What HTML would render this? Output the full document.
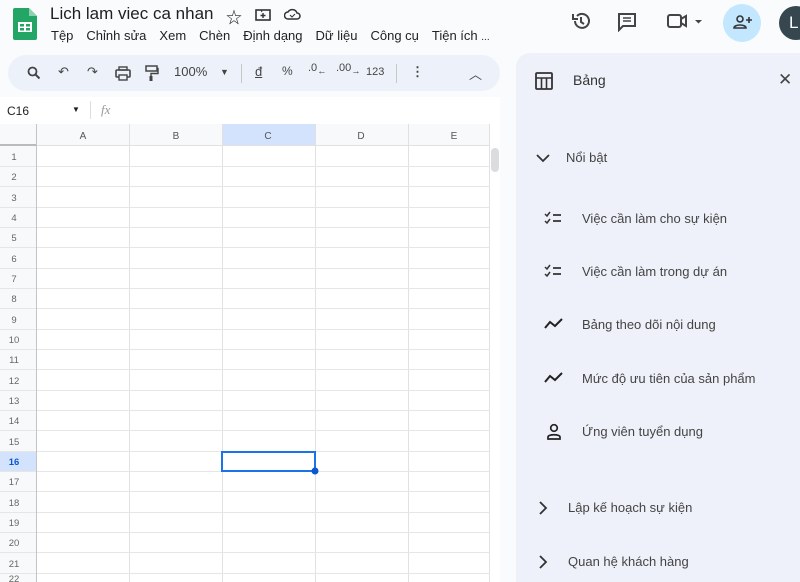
<!DOCTYPE html>
<html><head><meta charset="utf-8"><style>
*{margin:0;padding:0;box-sizing:border-box}
body{width:800px;height:582px;overflow:hidden;background:#f9fbfd;font-family:"Liberation Sans","Noto Sans CJK SC",sans-serif;color:#1f1f1f;position:relative}
.abs{position:absolute}
.menu span{margin-right:13px}
.tb{left:8px;top:55px;width:492px;height:36px;border-radius:18px;background:#edf2fa}
.tb .i{position:absolute;top:9px;font-size:13px;color:#444}
.grid{left:0;top:124px;width:500px;height:458px;background:#fff}
.rn{position:absolute;left:0;width:36px;font-size:10px;color:#666;text-align:center}
.panel{left:516px;top:53px;width:284px;height:529px;background:#eef1f9;border-radius:14px 0 0 0}
.it{position:absolute;left:66px;font-size:13px;color:#444}
.ic{position:absolute;left:28px}
</style></head><body>
<!-- logo -->
<svg class="abs" style="left:13px;top:8px" width="24" height="32" viewBox="0 0 24 32"><path d="M2 0h14l8 8v22a2 2 0 0 1-2 2H2a2 2 0 0 1-2-2V2a2 2 0 0 1 2-2z" fill="#23a566"/><path d="M16 0v8h8z" fill="#8ed1b1"/><rect x="5" y="14" width="14" height="10" fill="#fff"/><rect x="7" y="16" width="4" height="2.5" fill="#23a566"/><rect x="13" y="16" width="4" height="2.5" fill="#23a566"/><rect x="7" y="20" width="4" height="2.5" fill="#23a566"/><rect x="13" y="20" width="4" height="2.5" fill="#23a566"/></svg>
<div class="abs" style="left:50px;top:4px;font-size:17px;color:#1f1f1f">Lich lam viec ca nhan</div>
<div class="abs" style="left:226px;top:4px;font-size:16px">☆</div>
<svg class="abs" style="left:255px;top:8px" width="16" height="13"><rect x="1" y="2" width="14" height="10" fill="none" stroke="#333" stroke-width="1.6"/><path d="M1 2h5l1 2" stroke="#333" fill="none"/><path d="M8 5v5M5.5 7.5h5" stroke="#333" stroke-width="1.4"/></svg>
<svg class="abs" style="left:284px;top:8px" width="17" height="12"><path d="M4 11h9a3 3 0 0 0 0-6 5 5 0 0 0-9-1 3.5 3.5 0 0 0 0 7z" fill="none" stroke="#333" stroke-width="1.5"/><path d="M6 7l2 2 3-3" stroke="#333" fill="none"/></svg>
<div class="abs menu" style="left:51px;top:28px;font-size:13px;color:#222;white-space:nowrap"><span>Tệp</span><span>Chỉnh sửa</span><span>Xem</span><span>Chèn</span><span>Định dạng</span><span>Dữ liệu</span><span>Công cụ</span><span style="margin:0">Tiện ích</span> <span style="font-size:10px">...</span></div>
<!-- right icons -->
<svg class="abs" style="left:571px;top:11px" width="20" height="20" viewBox="0 0 20 20"><path d="M4 10a7 7 0 1 0 2-5" fill="none" stroke="#444" stroke-width="2"/><path d="M2 3v5h5" fill="none" stroke="#444" stroke-width="2"/><path d="M10 6v5l3 2" fill="none" stroke="#444" stroke-width="2"/></svg>
<svg class="abs" style="left:617px;top:12px" width="20" height="20"><path d="M2 2h16v12H6l-4 4z" fill="none" stroke="#444" stroke-width="2"/><path d="M6 6h8M6 9h8" stroke="#444" stroke-width="1.5"/></svg>
<svg class="abs" style="left:667px;top:13px" width="38" height="16"><rect x="1" y="2" width="13" height="12" rx="2" fill="none" stroke="#444" stroke-width="2"/><path d="M14 6l5-3v10l-5-3" fill="none" stroke="#444" stroke-width="2"/><path d="M28 7h7l-3.5 3.5z" fill="#444"/></svg>
<div class="abs" style="left:723px;top:4px;width:38px;height:38px;border-radius:50%;background:#c2e7ff"></div>
<svg class="abs" style="left:733px;top:14px" width="20" height="16"><circle cx="7" cy="5" r="3" fill="none" stroke="#333" stroke-width="1.6"/><path d="M1 14c0-4 12-4 12 0z" fill="none" stroke="#333" stroke-width="1.6"/><path d="M16 3v6M13 6h6" stroke="#333" stroke-width="1.6"/></svg>
<div class="abs" style="left:779px;top:6px;width:34px;height:34px;border-radius:50%;background:#37474f;color:#fff;font-size:17px;line-height:34px;padding-left:10px">L</div>
<!-- toolbar -->
<div class="abs tb">
<svg class="abs" style="left:19px;top:11px" width="14" height="14"><circle cx="5.5" cy="5.5" r="4" fill="none" stroke="#444" stroke-width="1.8"/><path d="M8.5 8.5l4 4" stroke="#444" stroke-width="2"/></svg>
<div class="i" style="left:50px">↶</div><div class="i" style="left:79px">↷</div>
<svg class="abs" style="left:107px;top:11px" width="16" height="15"><rect x="1" y="4" width="14" height="7" rx="1" fill="none" stroke="#444" stroke-width="1.6"/><rect x="4" y="1" width="8" height="3" fill="none" stroke="#444" stroke-width="1.4"/><rect x="4" y="9" width="8" height="5" fill="#edf2fa" stroke="#444" stroke-width="1.4"/></svg>
<svg class="abs" style="left:137px;top:10px" width="14" height="17"><rect x="1" y="1" width="11" height="5" fill="none" stroke="#444" stroke-width="1.5"/><path d="M12 3.5h1v5H6v3" fill="none" stroke="#444" stroke-width="1.4"/><rect x="4.5" y="11" width="3" height="5" fill="#444"/></svg>
<div class="i" style="left:166px">100%</div><div class="i" style="left:212px;font-size:9px;top:12px">▼</div>
<div class="abs" style="left:233px;top:9px;width:1px;height:19px;background:#c7c7c7"></div>
<div class="i" style="left:247px;text-decoration:underline">đ</div><div class="i" style="left:274px;font-size:12px">%</div>
<div class="i" style="left:300px;font-size:11px;top:7px">.0<sub>←</sub></div><div class="i" style="left:328px;font-size:11px;top:7px">.00<sub>→</sub></div>
<div class="i" style="left:358px;font-size:11px;top:11px">123</div>
<div class="abs" style="left:388px;top:9px;width:1px;height:19px;background:#c7c7c7"></div>
<div class="i" style="left:403px;font-weight:bold">⋮</div>
<div class="i" style="left:461px">︿</div>
</div>
<!-- formula bar -->
<div class="abs" style="left:0;top:97px;width:500px;height:27px;background:#fff"></div>
<div class="abs" style="left:7px;top:104px;font-size:12px">C16</div>
<div class="abs" style="left:72px;top:105px;font-size:8px">▼</div>
<div class="abs" style="left:90px;top:101px;width:1px;height:18px;background:#ddd"></div>
<div class="abs" style="left:101px;top:102px;font-size:13px;color:#999;font-style:italic;font-family:'Liberation Serif',serif">fx</div>
<!-- grid -->
<div class="abs grid">
<svg class="abs" style="left:0;top:0" width="500" height="458">
<rect x="0" y="0" width="490" height="21" fill="#f8f9fa"/>
<rect x="0" y="0" width="36" height="458" fill="#f8f9fa"/>
<rect x="222" y="0" width="93" height="21" fill="#d3e3fd"/>
<rect x="0" y="328" width="36" height="20" fill="#d3e3fd"/>
<g stroke="#e1e1e1" stroke-width="1">
<line x1="0" y1="21.5" x2="490" y2="21.5"/>
<line x1="129.5" y1="0" x2="129.5" y2="458"/><line x1="222.5" y1="0" x2="222.5" y2="458"/><line x1="315.5" y1="0" x2="315.5" y2="458"/><line x1="408.5" y1="0" x2="408.5" y2="458"/><line x1="489.5" y1="0" x2="489.5" y2="458"/>
</g>
<g stroke="#e6e6e6">
<line x1="0" y1="42.5" x2="490" y2="42.5"/><line x1="0" y1="62.5" x2="490" y2="62.5"/><line x1="0" y1="83.5" x2="490" y2="83.5"/><line x1="0" y1="103.5" x2="490" y2="103.5"/><line x1="0" y1="123.5" x2="490" y2="123.5"/><line x1="0" y1="144.5" x2="490" y2="144.5"/><line x1="0" y1="164.5" x2="490" y2="164.5"/><line x1="0" y1="184.5" x2="490" y2="184.5"/><line x1="0" y1="205.5" x2="490" y2="205.5"/><line x1="0" y1="225.5" x2="490" y2="225.5"/><line x1="0" y1="245.5" x2="490" y2="245.5"/><line x1="0" y1="266.5" x2="490" y2="266.5"/><line x1="0" y1="286.5" x2="490" y2="286.5"/><line x1="0" y1="306.5" x2="490" y2="306.5"/><line x1="0" y1="327.5" x2="490" y2="327.5"/><line x1="0" y1="347.5" x2="490" y2="347.5"/><line x1="0" y1="367.5" x2="490" y2="367.5"/><line x1="0" y1="388.5" x2="490" y2="388.5"/><line x1="0" y1="408.5" x2="490" y2="408.5"/><line x1="0" y1="428.5" x2="490" y2="428.5"/><line x1="0" y1="449.5" x2="490" y2="449.5"/>
</g>
<line x1="36.5" y1="0" x2="36.5" y2="458" stroke="#c4c4c4"/>
<line x1="0" y1="21" x2="36" y2="21" stroke="#bbb" stroke-width="2"/>
<rect x="222" y="328" width="93" height="19" fill="none" stroke="#1a73e8" stroke-width="2"/>
<circle cx="315" cy="347" r="3.5" fill="#0b57d0"/>
<rect x="491" y="24" width="8" height="24" rx="4" fill="#dadce0"/>
<g font-size="10" fill="#555" text-anchor="middle" font-family="Liberation Sans">
<text x="83" y="15">A</text><text x="176" y="15">B</text><text x="268" y="15">C</text><text x="361" y="15">D</text><text x="454" y="15">E</text>
</g>
<g font-size="9.5" fill="#666" text-anchor="middle" font-family="Liberation Sans">
<text x="14" y="36">1</text><text x="14" y="56">2</text><text x="14" y="77">3</text><text x="14" y="97">4</text><text x="14" y="117">5</text><text x="14" y="138">6</text><text x="14" y="158">7</text><text x="14" y="178">8</text><text x="14" y="199">9</text><text x="14" y="219">10</text><text x="14" y="239">11</text><text x="14" y="260">12</text><text x="14" y="280">13</text><text x="14" y="300">14</text><text x="14" y="321">15</text><text x="14" y="341" font-weight="bold" fill="#0b57d0">16</text><text x="14" y="361">17</text><text x="14" y="382">18</text><text x="14" y="402">19</text><text x="14" y="422">20</text><text x="14" y="443">21</text><text x="14" y="458">22</text>
</g>
</svg>
</div>
<!-- panel -->
<div class="abs panel">
<svg class="ic" style="left:19px;top:19px" width="18" height="18"><rect x="1" y="1" width="16" height="16" rx="1" fill="none" stroke="#333" stroke-width="1.8"/><path d="M1 6h16M6.5 6v11M11.5 6v11" stroke="#333" stroke-width="1.6"/></svg>
<div class="abs" style="left:57px;top:19px;font-size:14px;color:#333">Bảng</div>
<div class="abs" style="left:262px;top:17px;font-size:17px;color:#444">✕</div>
<svg class="abs" style="left:20px;top:100px" width="14" height="10"><path d="M1 2l6 6 6-6" fill="none" stroke="#333" stroke-width="1.8"/></svg>
<div class="abs" style="left:50px;top:97px;font-size:13px;color:#444">Nổi bật</div>
<svg class="ic" style="top:158px" width="18" height="14"><path d="M1 3l2 2 3-4M1 10l2 2 3-4" fill="none" stroke="#333" stroke-width="1.5"/><path d="M9 4h8M9 10h8" stroke="#333" stroke-width="1.8"/></svg>
<div class="it" style="top:158px">Việc cần làm cho sự kiện</div>
<svg class="ic" style="top:211px" width="18" height="14"><path d="M1 3l2 2 3-4M1 10l2 2 3-4" fill="none" stroke="#333" stroke-width="1.5"/><path d="M9 4h8M9 10h8" stroke="#333" stroke-width="1.8"/></svg>
<div class="it" style="top:211px">Việc cần làm trong dự án</div>
<svg class="ic" style="top:264px" width="20" height="14"><path d="M1 11l5-6 5 4 7-7" fill="none" stroke="#222" stroke-width="2"/></svg>
<div class="it" style="top:264px">Bảng theo dõi nội dung</div>
<svg class="ic" style="top:318px" width="20" height="14"><path d="M1 11l5-6 5 4 7-7" fill="none" stroke="#222" stroke-width="2"/></svg>
<div class="it" style="top:318px">Mức độ ưu tiên của sản phẩm</div>
<svg class="ic" style="left:30px;top:370px" width="16" height="18"><circle cx="8" cy="5" r="3.3" fill="none" stroke="#222" stroke-width="1.7"/><path d="M2 16v-2c0-3 12-3 12 0v2z" fill="none" stroke="#222" stroke-width="1.7"/></svg>
<div class="it" style="top:371px">Ứng viên tuyển dụng</div>
<svg class="abs" style="left:22px;top:448px" width="10" height="14"><path d="M2 1l6 6-6 6" fill="none" stroke="#333" stroke-width="1.8"/></svg>
<div class="abs" style="left:52px;top:447px;font-size:13px;color:#444">Lập kế hoạch sự kiện</div>
<svg class="abs" style="left:22px;top:502px" width="10" height="14"><path d="M2 1l6 6-6 6" fill="none" stroke="#333" stroke-width="1.8"/></svg>
<div class="abs" style="left:52px;top:501px;font-size:13px;color:#444">Quan hệ khách hàng</div>
</div>
</body></html>
